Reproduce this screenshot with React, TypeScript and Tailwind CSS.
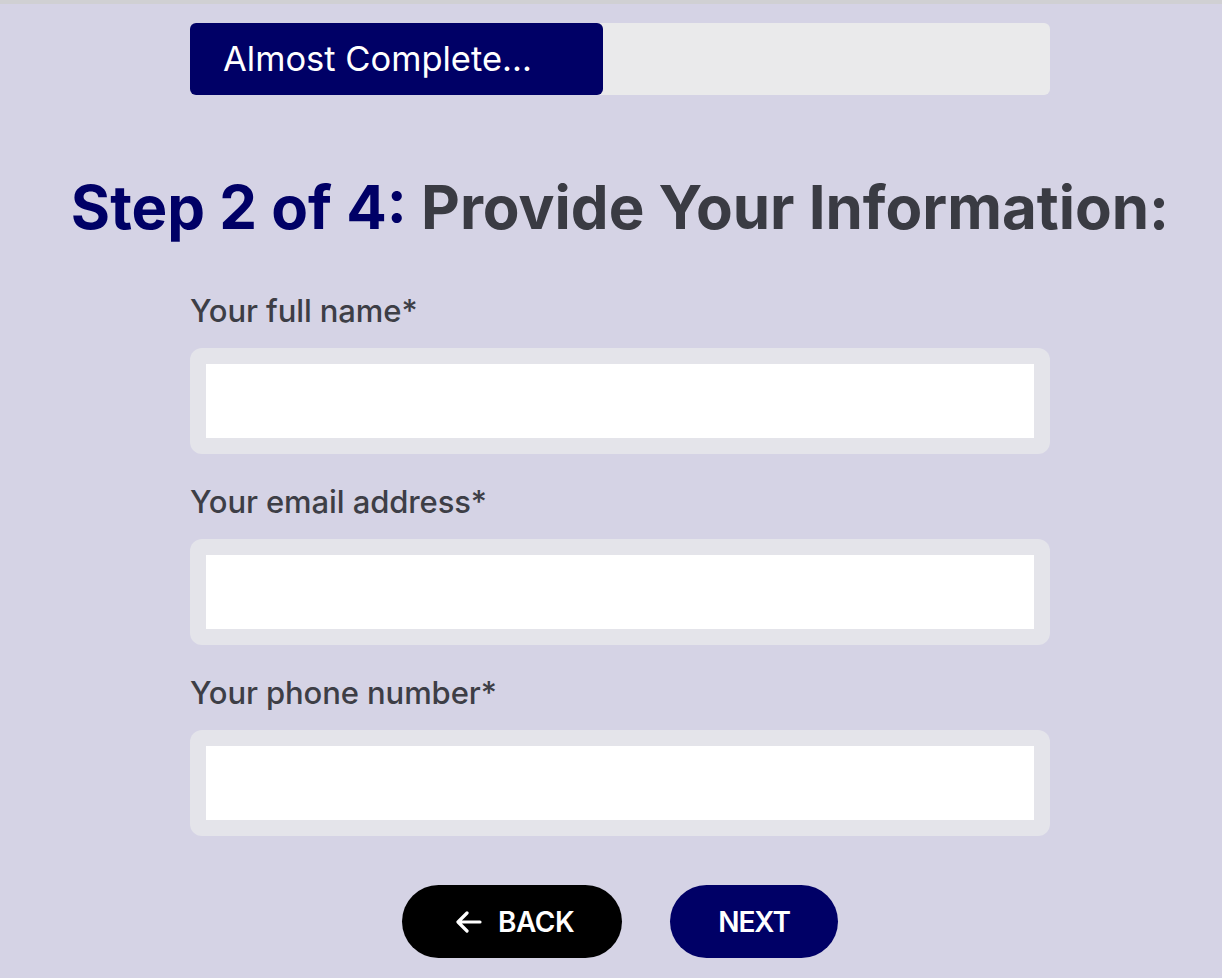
import React from "react";

const font = { fontFamily: "Inter, 'Noto Sans', sans-serif" };

function Field({ label }: { label: string }) {
  return (
    <div className="flex flex-col">
      <label className="text-[31px] leading-[36px] font-medium text-[#3d3e46] tracking-[-0.1px]">{label}</label>
      <div className="mt-[19px] rounded-[12px] bg-[#e4e4ea] p-4">
        <input className="block h-[74px] w-full bg-white outline-none" />
      </div>
    </div>
  );
}

export default function App() {
  return (
    <div className="min-h-[978px] w-full bg-[#d5d3e5] border-t-4 border-[#d0d0d3]" style={font}>
      <div className="flex flex-col items-center pl-[18px]">
        <div className="mt-[19px] flex h-[72px] w-[860px] rounded-[6px] bg-[#eaeaeb]">
          <div className="flex w-[413px] items-center rounded-[6px] bg-[#000066] pl-[33px] text-[34.5px] text-white">
            Almost Complete...
          </div>
        </div>
        <h1 className="mt-[76px] text-[60px] leading-[72px] font-bold whitespace-nowrap">
          <span className="text-[#000066]">Step 2 of 4:</span>{" "}
          <span className="text-[#3a3b43]">Provide Your Information:</span>
        </h1>
        <div className="mt-[50px] flex w-[860px] flex-col gap-[30px]">
          <Field label="Your full name*" />
          <Field label="Your email address*" />
          <Field label="Your phone number*" />
        </div>
        <div className="mt-[49px] flex gap-12">
          <button className="flex h-[73px] items-center gap-4 rounded-full bg-black pl-[54px] pr-12 text-[28px] font-semibold text-white tracking-[-0.5px]">
            <svg width="26" height="22" viewBox="0 0 26 22" fill="none" stroke="white" strokeWidth="3.2" strokeLinecap="round" strokeLinejoin="round">
              <path d="M24 11H3M11 2L2 11l9 9" />
            </svg>
            BACK
          </button>
          <button className="flex h-[73px] items-center rounded-full bg-[#000066] px-12 text-[28px] font-semibold text-white tracking-[-1px]">
            NEXT
          </button>
        </div>
      </div>
    </div>
  );
}
